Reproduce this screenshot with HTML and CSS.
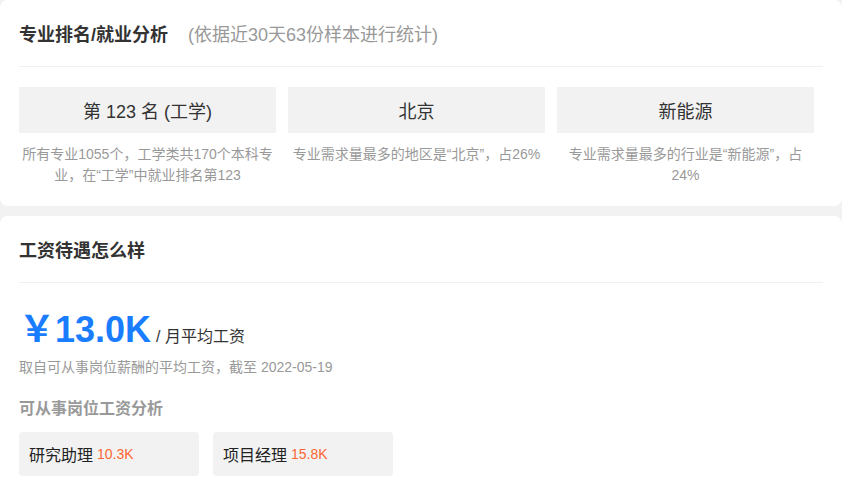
FILE: index.html
```html
<!DOCTYPE html>
<html lang="zh-CN">
<head>
    <meta charset="UTF-8">
    <meta name="viewport" content="width=device-width, initial-scale=1.0">
    <title>专业排名/就业分析</title>
    <link rel="stylesheet" href="styles.css">
</head>
<body>
<main>
    <section class="card">
        <div class="card-header">
            <h2 class="card-title">专业排名/就业分析</h2>
            <span class="card-subtitle">(依据近30天63份样本进行统计)</span>
        </div>
        <div class="rank-grid">
            <div class="rank-item">
                <div class="rank-box">第 123 名 (工学)</div>
                <p class="rank-desc">所有专业1055个，工学类共170个本科专业，在“工学”中就业排名第123</p>
            </div>
            <div class="rank-item">
                <div class="rank-box">北京</div>
                <p class="rank-desc">专业需求量最多的地区是“北京”，占26%</p>
            </div>
            <div class="rank-item">
                <div class="rank-box">新能源</div>
                <p class="rank-desc">专业需求量最多的行业是“新能源”，占24%</p>
            </div>
        </div>
    </section>

    <section class="card card-salary">
        <div class="card-header">
            <h2 class="card-title">工资待遇怎么样</h2>
        </div>
        <div class="salary-row">
            <span class="salary-value">￥13.0K</span>
            <span class="salary-unit">/ 月平均工资</span>
        </div>
        <p class="salary-note">取自可从事岗位薪酬的平均工资，截至 2022-05-19</p>
        <h3 class="section-label">可从事岗位工资分析</h3>
        <div class="job-list">
            <div class="job-chip">研究助理 <span class="job-pay">10.3K</span></div>
            <div class="job-chip">项目经理 <span class="job-pay">15.8K</span></div>
        </div>
    </section>
</main>
</body>
</html>
```

FILE: styles.css
```css
body {
    margin: 0;
    background-color: #f2f2f2;
    font-family: "Liberation Sans", "Noto Sans CJK SC", sans-serif;
    color: #333;
}

.card {
    background-color: #fff;
    border-radius: 8px;
    padding: 0 19px 20px;
}

.card-salary {
    margin-top: 10px;
    padding-bottom: 40px;
}

.card-header {
    display: flex;
    align-items: center;
    height: 66px;
    border-bottom: 1px solid #f0f0f0;
}

.card-title {
    margin: 0;
    font-size: 18px;
    font-weight: bold;
    color: #333;
}

.card-subtitle {
    margin-left: 20px;
    font-size: 18px;
    color: #999;
}

.rank-grid {
    display: grid;
    grid-template-columns: repeat(3, 257px);
    column-gap: 12px;
    margin-top: 20px;
}

.rank-box {
    height: 46px;
    display: flex;
    align-items: center;
    justify-content: center;
    background-color: #f2f2f2;
    font-size: 18px;
    color: #333;
}

.rank-desc {
    margin: 11px 0 0;
    font-size: 14px;
    line-height: 21px;
    color: #999;
    text-align: center;
}

.salary-row {
    display: flex;
    align-items: baseline;
    margin-top: 17px;
    height: 44px;
}

.salary-value {
    font-size: 36px;
    font-weight: bold;
    color: #1a7cff;
}

.salary-unit {
    margin-left: 5px;
    font-size: 16px;
    color: #333;
}

.salary-note {
    margin: 13px 0 0;
    font-size: 14px;
    line-height: 20px;
    color: #999;
}

.section-label {
    margin: 21px 0 0;
    font-size: 16px;
    line-height: 22px;
    font-weight: bold;
    color: #999;
}

.job-list {
    display: flex;
    gap: 14px;
    margin-top: 12px;
}

.job-chip {
    width: 180px;
    height: 44px;
    box-sizing: border-box;
    padding-left: 10px;
    display: flex;
    align-items: center;
    gap: 4px;
    background-color: #f2f2f2;
    border-radius: 4px;
    font-size: 16px;
    color: #222;
}

.job-pay {
    font-size: 14px;
    color: #ff6633;
}
```
